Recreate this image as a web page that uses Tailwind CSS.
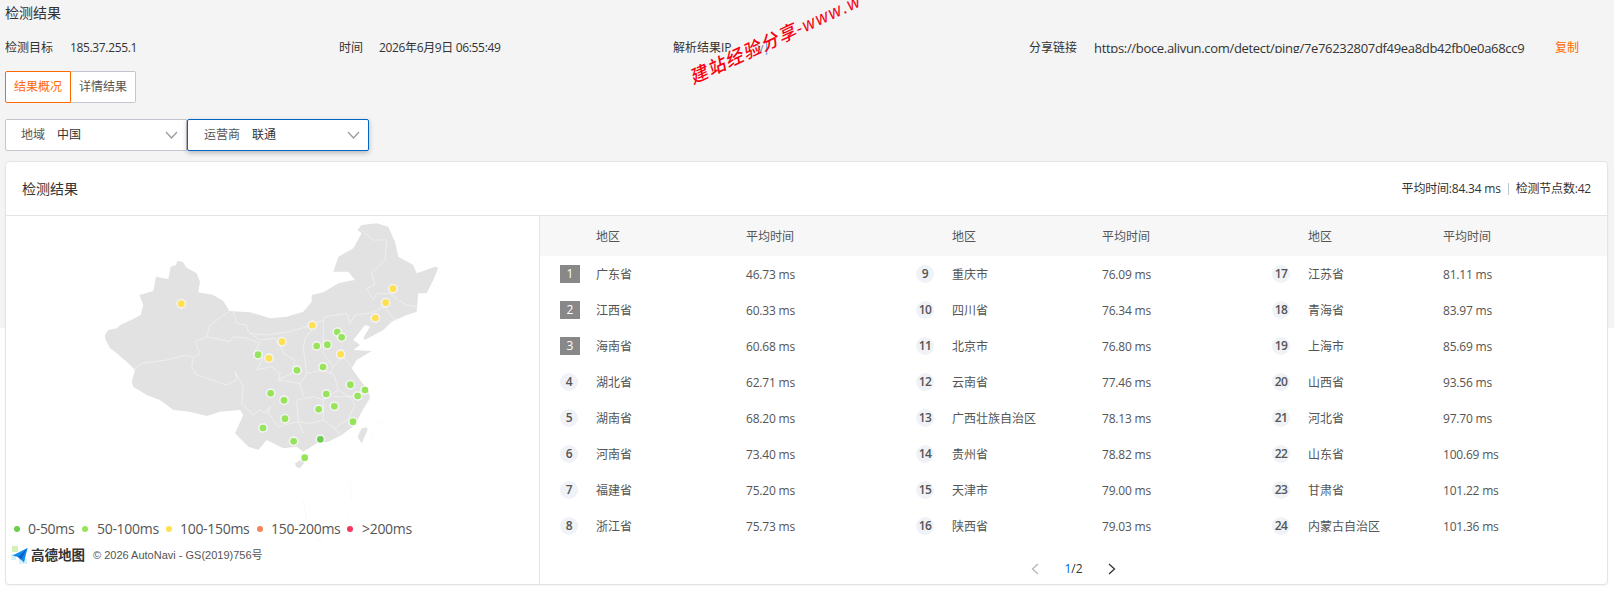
<!DOCTYPE html>
<html lang="zh-CN">
<head>
<meta charset="UTF-8">
<title>检测结果</title>
<script src="https://cdn.jsdelivr.net/npm/@tailwindcss/browser@4"></script>
</head>
<body class="relative h-[593px] overflow-hidden bg-[linear-gradient(#f4f4f4_328px,#fff_328px)] font-['Open_Sans','Noto_Sans_CJK_SC',sans-serif] text-xs text-[#333]">

<div class="px-[5px]">
  <h2 class="h-[26px] text-sm leading-[26px] text-[#333]">检测结果</h2>

  <div class="mt-[13px] grid h-[18px] grid-cols-[334px_334px_356px_1fr] items-center leading-[18px] tracking-[-0.35px]">
    <div class="flex"><span class="w-[65px] tracking-normal">检测目标</span><span>185.37.255.1</span></div>
    <div class="flex"><span class="w-[40px] tracking-normal">时间</span><span>2026年6月9日 06:55:49</span></div>
    <div class="flex"><span class="tracking-normal">解析结果IP</span><span class="ml-[26px] text-[#888]">v</span><span class="text-[#3b8ede]">|</span></div>
    <div class="flex">
      <span class="w-[65px] tracking-normal">分享链接</span>
      <span class="h-[14px] w-[461px] overflow-hidden text-[13px] leading-[18px] tracking-[-0.32px]">https://boce.aliyun.com/detect/ping/7e76232807df49ea8db42fb0e0a68cc9</span>
      <span class="tracking-normal text-[#ff6a00]">复制</span>
    </div>
  </div>

  <div class="mt-[14px] flex h-[32px]">
    <button class="w-[66px] rounded-l-[2px] border border-[#ff6a00] bg-white text-[#ff6a00]">结果概况</button>
    <button class="w-[65px] rounded-r-[2px] border border-l-0 border-[#c4c6cf] bg-white text-[#555]">详情结果</button>
  </div>

  <div class="mt-[16px] flex h-[32px]">
    <div class="flex w-[182px] items-center justify-between rounded-l-[2px] border border-[#c4c6cf] bg-white pl-[15px] pr-[8px]">
      <span><span class="text-[#555]">地域</span><span class="ml-[12px]">中国</span></span>
      <svg class="h-[8px] w-[13px]" viewBox="0 0 13 8" fill="none" stroke="#999" stroke-width="1.2"><path d="M1 1l5.5 6L12 1"/></svg>
    </div>
    <div class="flex w-[182px] items-center justify-between rounded-[2px] border border-[#0064c8] bg-white pl-[16px] pr-[8px] shadow-[0_2px_5px_rgba(0,0,0,0.25)]">
      <span><span class="text-[#555]">运营商</span><span class="ml-[12px]">联通</span></span>
      <svg class="h-[8px] w-[13px]" viewBox="0 0 13 8" fill="none" stroke="#999" stroke-width="1.2"><path d="M1 1l5.5 6L12 1"/></svg>
    </div>
  </div>

  <div class="mt-[10px] h-[424px] w-[1603px] rounded-[4px] border border-[#e3e4e6] bg-white shadow-[0_1px_2px_rgba(0,0,0,0.05)]">
    <div class="flex h-[54px] items-center justify-between border-b-[1.5px] border-[#e3e4e6] pl-[16px] pr-[16px]">
      <span class="text-sm">检测结果</span>
      <div class="flex items-center tracking-[-0.2px]">
        <span>平均时间:84.34 ms</span>
        <span class="mx-[7px] h-[12px] w-px bg-[#c4c6cf]"></span>
        <span>检测节点数:42</span>
      </div>
    </div>

    <div class="flex h-[368px]">
      <div class="w-[534px] shrink-0 border-r-[1.5px] border-[#e3e4e6]">
        <svg class="ml-[84px] block h-[254px] w-[350px] overflow-visible" viewBox="0 18 1050 762">
          <path fill="#e2e2e2" d="M45 375L55 360 80 355 95 343 130 327 152 315 160 285 148 255 190 243 198 200 235 207 242 170 258 165 262 153 278 155 290 173 320 190 330 215 325 247 370 255 400 273 418 303 480 307 510 315 540 325 590 320 640 305 665 275 665 255 700 247 745 220 780 212 795 210 775 185 730 185 745 140 790 115 815 70 802 60 815 45 860 40 895 50 915 95 925 140 970 165 980 190 1035 170 1045 173 1030 210 1010 250 985 250 980 305 950 315 905 335 880 360 825 390 820 383 840 350 825 345 790 390 810 405 790 420 845 423 800 450 785 475 810 510 835 540 840 565 815 605 795 645 755 675 715 695 680 700 640 725 620 710 580 715 530 690 505 720 475 710 435 670 460 615 450 600 390 605 350 618 300 605 250 600 210 570 170 555 130 530 125 515 135 480 115 460 75 425 60 415 45 385Z"/>
          <path fill="#e2e2e2" d="M830 652L833 660 815 700 803 680 815 655ZM615 760L640 745 645 755 630 775 618 770Z"/>
          <g fill="none" stroke="#f5f5f5" stroke-width="2" stroke-linejoin="round">
            <path d="M130 480L155 460 190 455 230 450 280 437 310 440"/>
            <path d="M418 303L395 320 360 345 350 380 315 395 330 430 310 445 305 470 320 495 380 515 410 525 440 510 435 485"/>
            <path d="M430 303L440 340 470 345 475 365 510 390 555 385 575 415 580 430 615 450 605 490 565 510"/>
            <path d="M350 380L420 395 430 380 470 385 510 400 490 430 520 445 500 480 545 470 570 490 565 510 630 520 650 490 640 415 645 385 665 360"/>
            <path d="M435 485L460 530 455 580 490 615 510 600 525 610 540 590 535 610 565 650 625 635 620 570 670 560 700 570 700 630 735 655 775 625 795 585 780 560 730 560"/>
            <path d="M480 370L530 375 600 365 650 350 700 330 705 320 770 310 780 340 795 315 840 310 885 290 905 320 925 335"/>
            <path d="M815 60L850 90 890 90 885 150 845 190 855 225 830 235 850 270 860 250 900 250 925 270 950 285 985 290"/>
            <path d="M700 330L700 430 730 470 760 440 785 470M730 470L720 490 730 490 745 540 780 560 835 545"/>
            <path d="M650 490L700 480 720 490M630 520L640 560M700 570L745 540M625 635L640 670M700 630L660 640 625 635M735 655L750 675"/>
          </g>
          <g fill="none" stroke="#f2f2f2" stroke-width="1.5">
            <path d="M855 640L875 635M845 690L850 665M740 725L752 732M640 870L650 930M675 985L700 1000M760 960L775 920M783 870L780 815"/>
          </g>
          <g stroke="#fff" stroke-opacity="0.55" stroke-width="10" paint-order="stroke" fill="#ffe050">
            <circle cx="274" cy="281" r="10"/><circle cx="909" cy="236" r="10"/><circle cx="887" cy="278" r="10"/><circle cx="856" cy="324" r="10"/><circle cx="667" cy="346" r="10"/><circle cx="576" cy="395" r="10"/><circle cx="537" cy="445" r="10"/><circle cx="752" cy="433" r="10"/>
          </g>
          <g stroke="#fff" stroke-opacity="0.55" stroke-width="10" paint-order="stroke" fill="#95e45a">
            <circle cx="742" cy="366" r="10"/><circle cx="755" cy="382" r="10"/><circle cx="680" cy="408" r="10"/><circle cx="712" cy="404" r="10"/><circle cx="504" cy="434" r="10"/><circle cx="621" cy="481" r="10"/><circle cx="699" cy="471" r="10"/><circle cx="781" cy="524" r="10"/><circle cx="825" cy="540" r="10"/><circle cx="803" cy="558" r="10"/><circle cx="709" cy="552" r="10"/><circle cx="542" cy="550" r="10"/><circle cx="582" cy="571" r="10"/><circle cx="733" cy="589" r="10"/><circle cx="686" cy="598" r="10"/><circle cx="585" cy="626" r="10"/><circle cx="789" cy="635" r="10"/><circle cx="519" cy="654" r="10"/><circle cx="611" cy="694" r="10"/><circle cx="644" cy="743" r="10"/>
          </g>
          <circle cx="691" cy="688" r="10" fill="#6cce4f" stroke="#fff" stroke-opacity="0.55" stroke-width="10" paint-order="stroke"/>
        </svg>

        <div class="mt-[49px] flex h-[20px] items-center whitespace-nowrap pl-[8px] text-sm leading-[20px] tracking-[-0.3px] text-[#555]">
          <span class="h-[6px] w-[6px] shrink-0 rounded-full bg-[#6cce4f]"></span><span class="ml-[8px] w-[54px] shrink-0">0-50ms</span>
          <span class="h-[6px] w-[6px] shrink-0 rounded-full bg-[#95e45a]"></span><span class="ml-[9px] w-[69px] shrink-0">50-100ms</span>
          <span class="h-[6px] w-[6px] shrink-0 rounded-full bg-[#ffe050]"></span><span class="ml-[8px] w-[77px] shrink-0">100-150ms</span>
          <span class="h-[6px] w-[6px] shrink-0 rounded-full bg-[#f5855b]"></span><span class="ml-[8px] w-[76px] shrink-0">150-200ms</span>
          <span class="h-[6px] w-[6px] shrink-0 rounded-full bg-[#f5365c]"></span><span class="ml-[9px]">&gt;200ms</span>
        </div>

        <div class="mt-[7px] flex h-[18px] items-center pl-[5px]">
          <svg class="h-[18px] w-[17px] shrink-0" viewBox="0 0 17 18">
            <path fill="#d6efb4" d="M1 0h6v6H1z"/>
            <path fill="#d5f1fb" d="M0 8h5v6H0zM8 13h8v5H8z"/>
            <path fill="#0d8df2" d="M16.5 2L1.5 9.5l5.5 1.5 6 5.5z"/>
            <path fill="#0a62c4" d="M7 11l9.5-9L10 13.5z"/>
          </svg>
          <span class="ml-[3px] text-[13.5px] font-semibold leading-[18px] text-[#333]">高德地图</span>
          <span class="ml-[8px] font-['Liberation_Sans','Noto_Sans_CJK_SC',sans-serif] text-[11px] text-[#555]">© 2026 AutoNavi - GS(2019)756号</span>
        </div>
      </div>

      <div class="flex-1">
        <div class="grid h-[40px] grid-cols-[356px_356px_1fr] items-center bg-[#f7f7f7] pl-[20px] text-[#555] [&_span]:translate-y-px">
          <div class="grid grid-cols-[36px_150px_1fr]"><span></span><span>地区</span><span>平均时间</span></div>
          <div class="grid grid-cols-[36px_150px_1fr]"><span></span><span>地区</span><span>平均时间</span></div>
          <div class="grid grid-cols-[36px_135px_1fr]"><span></span><span>地区</span><span>平均时间</span></div>
        </div>

        <div class="grid grid-cols-[356px_356px_1fr] pl-[20px] text-[#555] [&_span+span]:translate-y-px">
          <div>
            <div class="grid h-[36px] grid-cols-[36px_150px_1fr] items-center"><span class="flex h-[18px] w-[20px] items-center justify-center bg-[#888] text-white">1</span><span>广东省</span><span class="tracking-[-0.2px]">46.73 ms</span></div>
            <div class="grid h-[36px] grid-cols-[36px_150px_1fr] items-center"><span class="flex h-[18px] w-[20px] items-center justify-center bg-[#888] text-white">2</span><span>江西省</span><span class="tracking-[-0.2px]">60.33 ms</span></div>
            <div class="grid h-[36px] grid-cols-[36px_150px_1fr] items-center"><span class="flex h-[18px] w-[20px] items-center justify-center bg-[#888] text-white">3</span><span>海南省</span><span class="tracking-[-0.2px]">60.68 ms</span></div>
            <div class="grid h-[36px] grid-cols-[36px_150px_1fr] items-center"><span class="flex h-[18px] w-[18px] items-center justify-center rounded-full bg-[#eff2f7] font-semibold tracking-[-0.6px]">4</span><span>湖北省</span><span class="tracking-[-0.2px]">62.71 ms</span></div>
            <div class="grid h-[36px] grid-cols-[36px_150px_1fr] items-center"><span class="flex h-[18px] w-[18px] items-center justify-center rounded-full bg-[#eff2f7] font-semibold tracking-[-0.6px]">5</span><span>湖南省</span><span class="tracking-[-0.2px]">68.20 ms</span></div>
            <div class="grid h-[36px] grid-cols-[36px_150px_1fr] items-center"><span class="flex h-[18px] w-[18px] items-center justify-center rounded-full bg-[#eff2f7] font-semibold tracking-[-0.6px]">6</span><span>河南省</span><span class="tracking-[-0.2px]">73.40 ms</span></div>
            <div class="grid h-[36px] grid-cols-[36px_150px_1fr] items-center"><span class="flex h-[18px] w-[18px] items-center justify-center rounded-full bg-[#eff2f7] font-semibold tracking-[-0.6px]">7</span><span>福建省</span><span class="tracking-[-0.2px]">75.20 ms</span></div>
            <div class="grid h-[36px] grid-cols-[36px_150px_1fr] items-center"><span class="flex h-[18px] w-[18px] items-center justify-center rounded-full bg-[#eff2f7] font-semibold tracking-[-0.6px]">8</span><span>浙江省</span><span class="tracking-[-0.2px]">75.73 ms</span></div>
          </div>
          <div>
            <div class="grid h-[36px] grid-cols-[36px_150px_1fr] items-center"><span class="flex h-[18px] w-[18px] items-center justify-center rounded-full bg-[#eff2f7] font-semibold tracking-[-0.6px]">9</span><span>重庆市</span><span class="tracking-[-0.2px]">76.09 ms</span></div>
            <div class="grid h-[36px] grid-cols-[36px_150px_1fr] items-center"><span class="flex h-[18px] w-[18px] items-center justify-center rounded-full bg-[#eff2f7] font-semibold tracking-[-0.6px]">10</span><span>四川省</span><span class="tracking-[-0.2px]">76.34 ms</span></div>
            <div class="grid h-[36px] grid-cols-[36px_150px_1fr] items-center"><span class="flex h-[18px] w-[18px] items-center justify-center rounded-full bg-[#eff2f7] font-semibold tracking-[-0.6px]">11</span><span>北京市</span><span class="tracking-[-0.2px]">76.80 ms</span></div>
            <div class="grid h-[36px] grid-cols-[36px_150px_1fr] items-center"><span class="flex h-[18px] w-[18px] items-center justify-center rounded-full bg-[#eff2f7] font-semibold tracking-[-0.6px]">12</span><span>云南省</span><span class="tracking-[-0.2px]">77.46 ms</span></div>
            <div class="grid h-[36px] grid-cols-[36px_150px_1fr] items-center"><span class="flex h-[18px] w-[18px] items-center justify-center rounded-full bg-[#eff2f7] font-semibold tracking-[-0.6px]">13</span><span>广西壮族自治区</span><span class="tracking-[-0.2px]">78.13 ms</span></div>
            <div class="grid h-[36px] grid-cols-[36px_150px_1fr] items-center"><span class="flex h-[18px] w-[18px] items-center justify-center rounded-full bg-[#eff2f7] font-semibold tracking-[-0.6px]">14</span><span>贵州省</span><span class="tracking-[-0.2px]">78.82 ms</span></div>
            <div class="grid h-[36px] grid-cols-[36px_150px_1fr] items-center"><span class="flex h-[18px] w-[18px] items-center justify-center rounded-full bg-[#eff2f7] font-semibold tracking-[-0.6px]">15</span><span>天津市</span><span class="tracking-[-0.2px]">79.00 ms</span></div>
            <div class="grid h-[36px] grid-cols-[36px_150px_1fr] items-center"><span class="flex h-[18px] w-[18px] items-center justify-center rounded-full bg-[#eff2f7] font-semibold tracking-[-0.6px]">16</span><span>陕西省</span><span class="tracking-[-0.2px]">79.03 ms</span></div>
          </div>
          <div>
            <div class="grid h-[36px] grid-cols-[36px_135px_1fr] items-center"><span class="flex h-[18px] w-[18px] items-center justify-center rounded-full bg-[#eff2f7] font-semibold tracking-[-0.6px]">17</span><span>江苏省</span><span class="tracking-[-0.2px]">81.11 ms</span></div>
            <div class="grid h-[36px] grid-cols-[36px_135px_1fr] items-center"><span class="flex h-[18px] w-[18px] items-center justify-center rounded-full bg-[#eff2f7] font-semibold tracking-[-0.6px]">18</span><span>青海省</span><span class="tracking-[-0.2px]">83.97 ms</span></div>
            <div class="grid h-[36px] grid-cols-[36px_135px_1fr] items-center"><span class="flex h-[18px] w-[18px] items-center justify-center rounded-full bg-[#eff2f7] font-semibold tracking-[-0.6px]">19</span><span>上海市</span><span class="tracking-[-0.2px]">85.69 ms</span></div>
            <div class="grid h-[36px] grid-cols-[36px_135px_1fr] items-center"><span class="flex h-[18px] w-[18px] items-center justify-center rounded-full bg-[#eff2f7] font-semibold tracking-[-0.6px]">20</span><span>山西省</span><span class="tracking-[-0.2px]">93.56 ms</span></div>
            <div class="grid h-[36px] grid-cols-[36px_135px_1fr] items-center"><span class="flex h-[18px] w-[18px] items-center justify-center rounded-full bg-[#eff2f7] font-semibold tracking-[-0.6px]">21</span><span>河北省</span><span class="tracking-[-0.2px]">97.70 ms</span></div>
            <div class="grid h-[36px] grid-cols-[36px_135px_1fr] items-center"><span class="flex h-[18px] w-[18px] items-center justify-center rounded-full bg-[#eff2f7] font-semibold tracking-[-0.6px]">22</span><span>山东省</span><span class="tracking-[-0.2px]">100.69 ms</span></div>
            <div class="grid h-[36px] grid-cols-[36px_135px_1fr] items-center"><span class="flex h-[18px] w-[18px] items-center justify-center rounded-full bg-[#eff2f7] font-semibold tracking-[-0.6px]">23</span><span>甘肃省</span><span class="tracking-[-0.2px]">101.22 ms</span></div>
            <div class="grid h-[36px] grid-cols-[36px_135px_1fr] items-center"><span class="flex h-[18px] w-[18px] items-center justify-center rounded-full bg-[#eff2f7] font-semibold tracking-[-0.6px]">24</span><span>内蒙古自治区</span><span class="tracking-[-0.2px]">101.36 ms</span></div>
          </div>
        </div>

        <div class="flex h-[40px] items-center justify-center pt-[10px]">
          <svg class="h-[12px] w-[8px]" viewBox="0 0 8 12" fill="none" stroke="#b5b5b5" stroke-width="1.3"><path d="M7 1L1.5 6 7 11"/></svg>
          <span class="mx-[25px]"><span class="text-[#0064c8]">1</span>/2</span>
          <svg class="h-[12px] w-[8px]" viewBox="0 0 8 12" fill="none" stroke="#333" stroke-width="1.3"><path d="M1 1l5.5 5L1 11"/></svg>
        </div>
      </div>
    </div>
  </div>
</div>

<div class="absolute left-[690px] top-[68px] origin-left -rotate-[25deg] whitespace-nowrap text-[18px] font-medium italic leading-[20px] tracking-[1.5px] text-[#f5000f]">建站经验分享-www.w</div>

</body>
</html>
